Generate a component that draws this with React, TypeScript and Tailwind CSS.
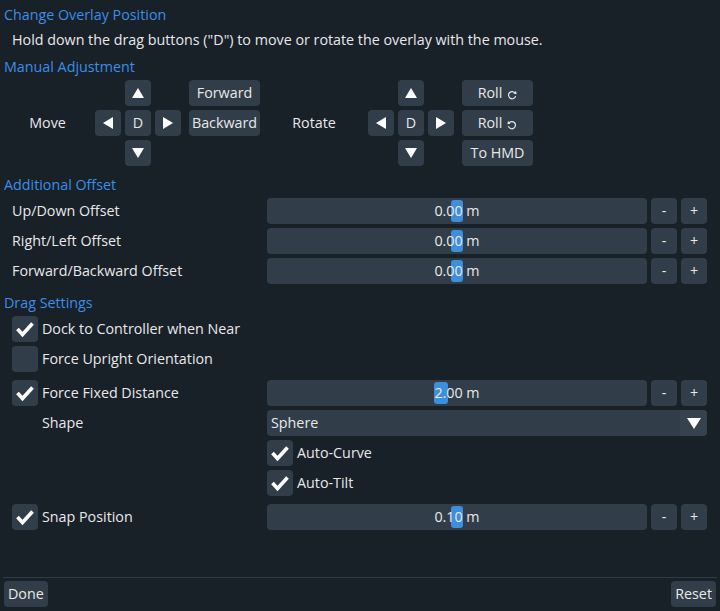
const frame = 'bg-[#313e49]';

const Tri = ({ dir }: { dir: 'up' | 'down' | 'left' | 'right' }) => {
  const pts = {
    up: '6,0 12,10 0,10',
    down: '0,0 12,0 6,10',
    left: '10,0 10,12 0,6',
    right: '0,0 10,6 0,12',
  }[dir];
  const vertical = dir === 'up' || dir === 'down';
  return (
    <svg width={vertical ? 12 : 10} height={vertical ? 10 : 12} viewBox={vertical ? '0 0 12 10' : '0 0 10 12'}>
      <polygon points={pts} fill="#ffffff" />
    </svg>
  );
};

const Btn = ({ children, className = '' }: { children: React.ReactNode; className?: string }) => (
  <div className={`h-[26px] rounded-[4px] ${frame} flex items-center justify-center text-[#e8e8e8] ${className}`}>
    {children}
  </div>
);

const RollIcon = ({ ccw }: { ccw?: boolean }) => (
  <svg width="10" height="10" viewBox="0 0 10 10" className="ml-[5px] mt-[3px]" style={ccw ? { transform: 'scaleX(-1)' } : undefined}>
    <path d="M8.3 3.4 A3.6 3.6 0 1 0 8.6 6.2" fill="none" stroke="#e8e8e8" strokeWidth="1.2" />
    <polygon points="6.4,3.6 9.6,4.2 9.0,1.0" fill="#e8e8e8" />
  </svg>
);

const DPad = () => (
  <div className="grid grid-cols-[26px_26px_26px] grid-rows-[26px_26px_26px] gap-[4px]">
    <div />
    <Btn><Tri dir="up" /></Btn>
    <div />
    <Btn><Tri dir="left" /></Btn>
    <Btn>D</Btn>
    <Btn><Tri dir="right" /></Btn>
    <div />
    <Btn><Tri dir="down" /></Btn>
    <div />
  </div>
);

const Check = ({ on }: { on: boolean }) => (
  <div className={`w-[26px] h-[26px] rounded-[4px] ${frame} shrink-0 flex items-center justify-center`}>
    {on && (
      <svg width="26" height="26" viewBox="0 0 26 26">
        <path d="M5.5 13 L10.5 18.5 L20.5 7.5" fill="none" stroke="#ffffff" strokeWidth="3.6" />
      </svg>
    )}
  </div>
);

const Slider = ({ value, grab, grabW = 12 }: { value: string; grab: number; grabW?: number }) => (
  <div className="flex items-center gap-[4px]">
    <div className={`relative w-[380px] h-[26px] rounded-[4px] ${frame} flex items-center justify-center`}>
      <div className="absolute top-[2px] h-[22px] rounded-[3px] bg-[#3d8fdc]" style={{ left: grab, width: grabW }} />
      <span className="relative text-[#e8e8e8]">{value}</span>
    </div>
    <Btn className="w-[26px]">-</Btn>
    <Btn className="w-[26px]">+</Btn>
  </div>
);

const Heading = ({ children, className = '' }: { children: React.ReactNode; className?: string }) => (
  <div className={`h-[20px] leading-[20px] pl-[4px] text-[#3d8ee6] ${className}`}>{children}</div>
);

const OffsetRow = ({ label, className = '' }: { label: string; className?: string }) => (
  <div className={`flex items-center h-[26px] ${className}`}>
    <div className="w-[267px] pl-[12px]">{label}</div>
    <Slider value="0.00 m" grab={184} />
  </div>
);

export default function App() {
  return (
    <div className="w-[720px] h-[611px] bg-[#182028] text-[#e8e8e8] text-[14.3px] font-['Open_Sans','Noto_Sans',sans-serif] flex flex-col overflow-hidden">
      <Heading className="mt-[5px]">Change Overlay Position</Heading>
      <div className="h-[20px] leading-[20px] pl-[12px] mt-[5px]">
        Hold down the drag buttons ("D") to move or rotate the overlay with the mouse.
      </div>
      <Heading className="mt-[7px]">Manual Adjustment</Heading>

      <div className="flex mt-[3px]">
        <div className="w-[95px] flex items-center justify-center">Move</div>
        <DPad />
        <div className="flex flex-col gap-[4px] ml-[8px]">
          <Btn className="w-[71px]">Forward</Btn>
          <Btn className="w-[71px]">Backward</Btn>
        </div>
        <div className="w-[108px] flex items-center justify-center">Rotate</div>
        <DPad />
        <div className="flex flex-col gap-[4px] ml-[8px]">
          <Btn className="w-[71px]">Roll<RollIcon /></Btn>
          <Btn className="w-[71px]">Roll<RollIcon ccw /></Btn>
          <Btn className="w-[71px]">To HMD</Btn>
        </div>
      </div>

      <Heading className="mt-[9px]">Additional Offset</Heading>
      <OffsetRow label="Up/Down Offset" className="mt-[3px]" />
      <OffsetRow label="Right/Left Offset" className="mt-[4px]" />
      <OffsetRow label="Forward/Backward Offset" className="mt-[4px]" />

      <Heading className="mt-[9px]">Drag Settings</Heading>
      <div className="flex items-center gap-[4px] pl-[12px] mt-[3px]">
        <Check on />
        <span>Dock to Controller when Near</span>
      </div>
      <div className="flex items-center gap-[4px] pl-[12px] mt-[4px]">
        <Check on={false} />
        <span>Force Upright Orientation</span>
      </div>
      <div className="flex items-center mt-[8px]">
        <div className="w-[267px] flex items-center gap-[4px] pl-[12px]">
          <Check on />
          <span>Force Fixed Distance</span>
        </div>
        <Slider value="2.00 m" grab={167} grabW={14} />
      </div>
      <div className="flex items-center mt-[4px] h-[26px]">
        <div className="w-[267px] pl-[42px]">Shape</div>
        <div className={`w-[440px] h-[26px] rounded-[4px] ${frame} flex items-center overflow-hidden`}>
          <span className="flex-1 pl-[4px]">Sphere</span>
          <div className="w-[27px] h-full bg-[#36434f] flex items-center justify-center">
            <svg width="14" height="11" viewBox="0 0 14 11">
              <polygon points="0,0 14,0 7,11" fill="#ffffff" />
            </svg>
          </div>
        </div>
      </div>
      <div className="flex items-center gap-[4px] pl-[267px] mt-[4px]">
        <Check on />
        <span>Auto-Curve</span>
      </div>
      <div className="flex items-center gap-[4px] pl-[267px] mt-[4px]">
        <Check on />
        <span>Auto-Tilt</span>
      </div>
      <div className="flex items-center mt-[8px]">
        <div className="w-[267px] flex items-center gap-[4px] pl-[12px]">
          <Check on />
          <span>Snap Position</span>
        </div>
        <Slider value="0.10 m" grab={184} />
      </div>

      <div className="mt-auto mx-[3px] h-px bg-[#2e3a45]" />
      <div className="flex justify-between px-[4px] pt-[3px] pb-[4px]">
        <Btn className="px-[4px]">Done</Btn>
        <Btn className="px-[4px]">Reset</Btn>
      </div>
    </div>
  );
}
